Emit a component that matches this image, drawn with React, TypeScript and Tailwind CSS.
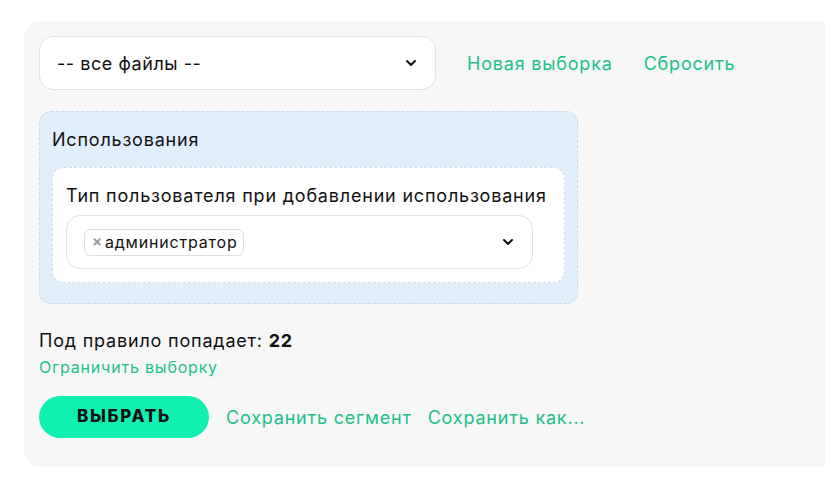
import React from "react";

const Chevron = () => (
  <svg width="12" height="8" viewBox="0 0 12 8" fill="none">
    <path d="M2 2l4 4 4-4" stroke="#111" strokeWidth="2" strokeLinecap="round" strokeLinejoin="round" />
  </svg>
);

export default function App() {
  return (
    <div className="min-h-[479px] w-[825px] bg-white pt-[21px] pl-[24px] overflow-hidden tracking-[0.05em]" style={{ fontFamily: "Inter, 'Noto Sans', sans-serif" }}>
      <div className="w-[820px] rounded-l-[16px] bg-[#f7f7f7] pl-[15px] pt-[15px] pb-[29px] text-[#111]">
        <div className="flex items-center">
          <div className="flex h-[54px] w-[397px] items-center justify-between rounded-[14px] border border-[#e2e2e2] bg-white pl-[17px] pr-[18px] text-[18px]">
            <span className="tracking-[0.03em]">-- все файлы --</span>
            <Chevron />
          </div>
          <span className="ml-[31px] text-[18px] text-[#1dbf8a]">Новая выборка</span>
          <span className="ml-[31px] text-[18px] text-[#1dbf8a]">Сбросить</span>
        </div>
        <div className="mt-[21px] w-[539px] rounded-[12px] border border-dashed border-[#c9d9ea] bg-[#e1effd] px-[12px] pt-[16px] pb-[20px]">
          <div className="text-[18px] leading-[24px]">Использования</div>
          <div className="mt-[15px] rounded-[12px] border border-dashed border-[#d6dde5] bg-white pl-[13px] pr-[31px] pt-[16px] pb-[13px]">
            <div className="text-[18px] leading-[24px] whitespace-nowrap">Тип пользователя при добавлении использования</div>
            <div className="mt-[7px] flex h-[54px] items-center justify-between rounded-[14px] border border-[#e2e2e2] bg-white pl-[17px] pr-[18px]">
              <span className="flex h-[27px] items-center rounded-[6px] border border-[#dedede] bg-white pl-[7px] pr-[6px] text-[16px]">
                <span className="mr-[2px] text-[15px] font-bold text-[#9a9a9a]">×</span>
                администратор
              </span>
              <Chevron />
            </div>
          </div>
        </div>
        <div className="mt-[25px] text-[18px] leading-[24px]">
          Под правило попадает: <b>22</b>
        </div>
        <div className="mt-[4px] text-[16px] leading-[20px] text-[#1dbf8a]">Ограничить выборку</div>
        <div className="mt-[19px] flex items-center">
          <button className="flex h-[42px] w-[170px] items-center justify-center rounded-full bg-[#10f0b0] text-[17px] font-extrabold tracking-[0.1em] text-[#111]">
            ВЫБРАТЬ
          </button>
          <span className="ml-[17px] text-[18px] text-[#1dbf8a]">Сохранить сегмент</span>
          <span className="ml-[16px] text-[18px] text-[#1dbf8a]">Сохранить как...</span>
        </div>
      </div>
    </div>
  );
}
